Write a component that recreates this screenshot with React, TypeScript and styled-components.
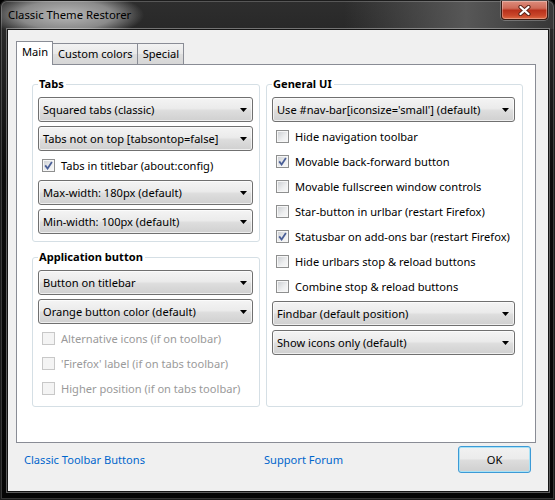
import styled, { createGlobalStyle } from 'styled-components';

const GlobalStyle = createGlobalStyle`
  html, body {
    margin: 0;
    padding: 0;
    background: #000;
  }
  body {
    font-family: 'Noto Sans', 'Open Sans', sans-serif;
    font-size: 11.1px;
    color: #000;
  }
  * {
    box-sizing: border-box;
  }
`;

const Arrow = () => (
  <svg width="7" height="4" viewBox="0 0 7 4">
    <polygon points="0,0 7,0 3.5,4" fill="#000" />
  </svg>
);

const Check = () => (
  <svg width="9" height="9" viewBox="0 0 9 9">
    <path
      d="M1.2 4.4 L3.6 7.5 L7.9 1.1"
      fill="none"
      stroke="#4a5f97"
      strokeWidth="1.8"
    />
  </svg>
);

const Select = ({ label }: { label: string }) => (
  <SelectBox>
    <span>{label}</span>
    <ArrowSlot>
      <Arrow />
    </ArrowSlot>
  </SelectBox>
);

const CheckOption = ({
  label,
  checked,
  disabled,
}: {
  label: string;
  checked?: boolean;
  disabled?: boolean;
}) => (
  <CheckRow $disabled={disabled}>
    <Box $disabled={disabled}>{checked && <Check />}</Box>
    <span>{label}</span>
  </CheckRow>
);

export default function App() {
  return (
    <>
      <GlobalStyle />
      <Window>
        <TitleBar>
          <Title>Classic Theme Restorer</Title>
          <CloseButton>
            <svg width="13" height="11" viewBox="0 0 13 11">
              <path
                d="M2.5 2 L10.5 9 M10.5 2 L2.5 9"
                stroke="#5a2418"
                strokeWidth="4.2"
                strokeLinecap="round"
              />
              <path
                d="M2.5 2 L10.5 9 M10.5 2 L2.5 9"
                stroke="#fff"
                strokeWidth="2.3"
                strokeLinecap="round"
              />
            </svg>
          </CloseButton>
        </TitleBar>
        <Client>
          <TabStrip>
            <Tab $active>Main</Tab>
            <Tab>Custom colors</Tab>
            <Tab>Special</Tab>
          </TabStrip>
          <Panel>
            <Columns>
              <LeftColumn>
                <Group>
                  <Legend>Tabs</Legend>
                  <Stack>
                    <Select label="Squared tabs (classic)" />
                    <Select label="Tabs not on top [tabsontop=false]" />
                    <CheckOption label="Tabs in titlebar (about:config)" checked />
                    <Select label="Max-width: 180px (default)" />
                    <Select label="Min-width: 100px (default)" />
                  </Stack>
                </Group>
                <Group>
                  <Legend>Application button</Legend>
                  <Stack>
                    <Select label="Button on titlebar" />
                    <Select label="Orange button color (default)" />
                    <CheckOption label="Alternative icons (if on toolbar)" disabled />
                    <CheckOption label="'Firefox' label (if on tabs toolbar)" disabled />
                    <CheckOption label="Higher position (if on tabs toolbar)" disabled />
                  </Stack>
                </Group>
              </LeftColumn>
              <Group $wide>
                <Legend>General UI</Legend>
                <Stack>
                  <Select label="Use #nav-bar[iconsize='small'] (default)" />
                  <CheckOption label="Hide navigation toolbar" />
                  <CheckOption label="Movable back-forward button" checked />
                  <CheckOption label="Movable fullscreen window controls" />
                  <CheckOption label="Star-button in urlbar (restart Firefox)" />
                  <CheckOption label="Statusbar on add-ons bar (restart Firefox)" checked />
                  <CheckOption label="Hide urlbars stop & reload buttons" />
                  <CheckOption label="Combine stop & reload buttons" />
                  <Select label="Findbar (default position)" />
                  <Select label="Show icons only (default)" />
                </Stack>
              </Group>
            </Columns>
          </Panel>
          <Footer>
            <Link>Classic Toolbar Buttons</Link>
            <Link>Support Forum</Link>
            <OkButton>OK</OkButton>
          </Footer>
        </Client>
      </Window>
    </>
  );
}

const Window = styled.div`
  width: 555px;
  height: 500px;
  display: flex;
  flex-direction: column;
  border-radius: 7px 7px 0 0;
  background:
    radial-gradient(
      78px 24px at 66px 15px,
      rgba(200, 200, 200, 0.9) 0%,
      rgba(170, 170, 170, 0.75) 60%,
      rgba(0, 0, 0, 0) 100%
    ),
    linear-gradient(
        90deg,
        rgba(0, 0, 0, 0) 62%,
        rgba(95, 95, 95, 0.85) 84%,
        rgba(60, 60, 60, 0.7) 100%
      )
      top / 100% 29px no-repeat,
    linear-gradient(180deg, #2e2e2e 0%, #0c0c0c 35%, #050505 100%);
  box-shadow:
    inset 0 0 0 1px #1c1c1c,
    inset 0 0 0 2px rgba(255, 255, 255, 0.2);
`;

const TitleBar = styled.div`
  height: 29px;
  display: flex;
  align-items: flex-start;
  padding-left: 8px;
`;

const Title = styled.div`
  margin-top: 6px;
  font-size: 11.3px;
  line-height: 18px;
  color: #000;
`;

const CloseButton = styled.div`
  margin-left: auto;
  margin-right: 7px;
  margin-top: 1px;
  width: 47px;
  height: 19px;
  display: flex;
  align-items: center;
  justify-content: center;
  border: 1px solid #3a1a12;
  border-top: none;
  border-radius: 0 0 4px 4px;
  background: linear-gradient(
    180deg,
    #dc8c7c 0%,
    #cf6b58 40%,
    #b8311c 52%,
    #c9462a 80%,
    #dc6a44 100%
  );
  box-shadow:
    inset 0 0 0 1px rgba(255, 255, 255, 0.3),
    0 0 0 1px rgba(255, 255, 255, 0.25);
`;

const Client = styled.div`
  flex: 1;
  margin: 0 6px 8px 7px;
  display: flex;
  flex-direction: column;
  padding: 11px 12px 0 8px;
  background: #f0f0f0;
  border: 1px solid #151515;
  box-shadow: 0 0 0 1px rgba(255, 255, 255, 0.35);
`;

const TabStrip = styled.div`
  height: 23px;
  display: flex;
  align-items: flex-end;
`;

const Tab = styled.div<{ $active?: boolean }>`
  position: relative;
  z-index: ${({ $active }) => ($active ? 1 : 0)};
  height: ${({ $active }) => ($active ? 24 : 21)}px;
  margin-bottom: ${({ $active }) => ($active ? -1 : 0)}px;
  margin-left: ${({ $active }) => ($active ? 0 : -1)}px;
  padding: 0 4px 0 5px;
  line-height: 20px;
  white-space: nowrap;
  border: 1px solid #898c95;
  border-bottom: none;
  background: ${({ $active }) =>
    $active
      ? '#fff'
      : 'linear-gradient(180deg, #f2f2f2 0%, #e8e8e8 50%, #dedede 52%, #d6d6d6 100%)'};
`;

const Panel = styled.div`
  height: 379px;
  padding: 11px 12px 0 15px;
  background: #fff;
  border: 1px solid #898c95;
`;

const Columns = styled.div`
  display: grid;
  grid-template-columns: 228px 257px;
  column-gap: 6px;
  align-items: stretch;
`;

const LeftColumn = styled.div`
  display: flex;
  flex-direction: column;
  gap: 7px;
`;

const Group = styled.fieldset<{ $wide?: boolean }>`
  margin: 0;
  min-width: 0;
  padding: 5px ${({ $wide }) => ($wide ? 7 : 6)}px 7px 5px;
  border: 1px solid #d5dfe5;
  border-radius: 3px;
`;

const Legend = styled.legend`
  padding: 0 2px 0 1px;
  font-weight: 700;
  line-height: 16px;
`;

const Stack = styled.div`
  display: flex;
  flex-direction: column;
  gap: 4px;
`;

const SelectBox = styled.div`
  height: 25px;
  display: flex;
  align-items: center;
  padding: 0 5px 0 4px;
  white-space: nowrap;
  border: 1px solid #707070;
  border-radius: 3px;
  background: linear-gradient(
    180deg,
    #f4f4f4 0%,
    #ebebeb 45%,
    #dddddd 55%,
    #d0d0d0 100%
  );
  box-shadow: inset 0 0 0 1px rgba(255, 255, 255, 0.65);
`;

const ArrowSlot = styled.span`
  margin-left: auto;
  display: flex;
  align-items: center;
`;

const CheckRow = styled.div<{ $disabled?: boolean }>`
  height: 21px;
  display: flex;
  align-items: center;
  gap: 6px;
  padding-left: 4px;
  white-space: nowrap;
  color: ${({ $disabled }) => ($disabled ? '#9a9a9a' : '#000')};
`;

const Box = styled.span<{ $disabled?: boolean }>`
  flex: none;
  width: 13px;
  height: 13px;
  display: flex;
  align-items: center;
  justify-content: center;
  border: 1px solid ${({ $disabled }) => ($disabled ? '#c8c8c8' : '#8e8f8f')};
  background: ${({ $disabled }) =>
    $disabled ? '#f4f4f4' : 'linear-gradient(135deg, #c9ccd0 0%, #eeeff0 60%, #f8f8f8 100%)'};
  box-shadow: inset 0 0 0 1px ${({ $disabled }) => ($disabled ? '#f4f4f4' : '#f6f6f6')};
`;

const Footer = styled.div`
  flex: 1;
  display: grid;
  grid-template-columns: 240px 1fr auto;
  align-items: start;
  padding: 3px 5px 0 8px;
`;

const Link = styled.span`
  line-height: 27px;
  color: #0066cc;
  cursor: pointer;
`;

const OkButton = styled.div`
  width: 73px;
  height: 27px;
  display: flex;
  align-items: center;
  justify-content: center;
  border: 1px solid #3c9ad6;
  border-radius: 3px;
  background: linear-gradient(
    180deg,
    #f2f2f2 0%,
    #ebebeb 48%,
    #dddddd 52%,
    #cfcfcf 100%
  );
  box-shadow: inset 0 0 0 1px #a9e2f6;
`;
